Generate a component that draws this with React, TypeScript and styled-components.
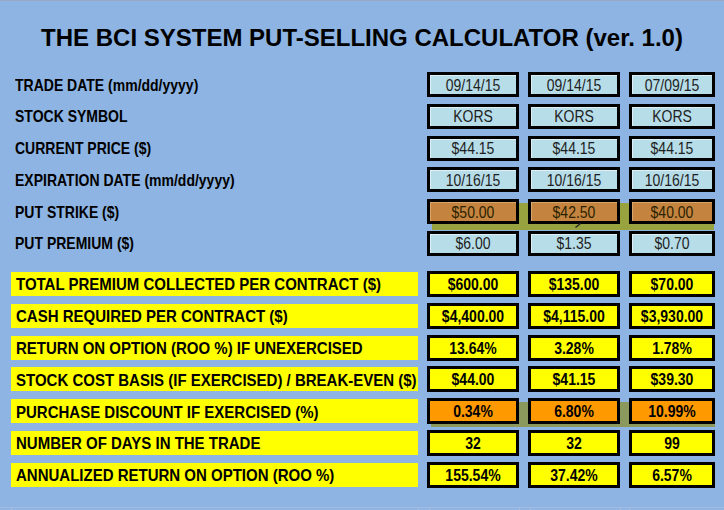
import React from 'react';
import styled, { createGlobalStyle, css } from 'styled-components';

const Global = createGlobalStyle`
  html, body { margin: 0; padding: 0; background: #8db4e2; }
  body { font-family: "Liberation Sans", Arial, sans-serif; }
`;

const Sheet = styled.div`
  width: 724px;
  height: 510px;
  box-sizing: border-box;
  border-top: 1px solid #98a9c2;
  background: #8db4e2;
  display: flex;
  flex-direction: column;
  overflow: hidden;
`;

const Title = styled.h1`
  margin: 0;
  height: 71px;
  box-sizing: border-box;
  padding-top: 2px;
  display: flex;
  align-items: center;
  justify-content: center;
  font-size: 24px;
  font-weight: 700;
  color: #000;
`;

const Section = styled.section<{ $gap: number; $top?: number }>`
  display: flex;
  flex-direction: column;
  align-items: flex-start;
  gap: ${(p) => p.$gap}px;
  margin-top: ${(p) => p.$top ?? 0}px;
  padding-left: 11px;
`;

type Band = { left: number; right: number; top: number; bottom: number; color: string };

const Row = styled.div<{ $h: number; $band?: Band }>`
  position: relative;
  display: grid;
  grid-template-columns: 407px 92px 92px 86px;
  column-gap: 9px;
  width: 704px;
  height: ${(p) => p.$h}px;
  ${(p) =>
    p.$band &&
    css`
      &::before {
        content: '';
        position: absolute;
        left: ${p.$band.left}px;
        right: ${p.$band.right}px;
        top: ${p.$band.top}px;
        bottom: ${p.$band.bottom}px;
        background: ${p.$band.color};
      }
    `}
`;

const Txt = styled.span`
  display: inline-block;
  transform: scaleY(1.15);
`;

const Label = styled.div`
  align-self: center;
  padding-left: 4px;
  font-size: 14px;
  font-weight: 700;
  color: #000;
  white-space: nowrap;
`;

const YellowLabel = styled.div`
  align-self: center;
  height: 24px;
  box-sizing: border-box;
  padding-left: 5px;
  display: flex;
  align-items: center;
  background: #ffff00;
  font-size: 15px;
  font-weight: 700;
  color: #000;
  white-space: nowrap;
`;

const tones = {
  blue: { bg: '#b7dde8', fg: '#1e1e1e', hi: 'rgba(255,255,255,0.55)' },
  brown: { bg: '#c4843f', fg: '#2a2200', hi: 'rgba(255,230,190,0.35)' },
  yellow: { bg: '#ffff00', fg: '#000', hi: 'rgba(255,255,255,0)' },
  orange: { bg: '#ff9900', fg: '#000', hi: 'rgba(255,255,255,0)' },
};
type Tone = keyof typeof tones;

const Cell = styled.div<{ $tone: Tone; $bold?: boolean }>`
  position: relative;
  z-index: 1;
  box-sizing: border-box;
  border: 3px solid #000;
  background: ${(p) => tones[p.$tone].bg};
  box-shadow: inset 1px 1px 0 ${(p) => tones[p.$tone].hi};
  color: ${(p) => tones[p.$tone].fg};
  display: flex;
  align-items: center;
  justify-content: center;
  font-size: 14px;
  font-weight: ${(p) => (p.$bold ? 700 : 400)};
  white-space: nowrap;
`;

const Tick = styled.svg`
  position: absolute;
  left: 44px;
  bottom: -7px;
  width: 6px;
  height: 5px;
`;

const Footer = styled.div`
  margin-top: auto;
  height: 2px;
  border-top: 1px solid #a6bcdc;
  display: grid;
  grid-template-columns: 11px 407px 11px 90px 11px 90px 9px 86px 1fr;
`;

const FooterTick = styled.span`
  border-left: 1px solid #a6bcdc;
`;

type DataRow = { label: string; values: string[]; tone: Tone; band?: Band; tick?: boolean };

const inputs: DataRow[] = [
  { label: 'TRADE DATE (mm/dd/yyyy)', values: ['09/14/15', '09/14/15', '07/09/15'], tone: 'blue' },
  { label: 'STOCK SYMBOL', values: ['KORS', 'KORS', 'KORS'], tone: 'blue' },
  { label: 'CURRENT PRICE ($)', values: ['$44.15', '$44.15', '$44.15'], tone: 'blue' },
  { label: 'EXPIRATION DATE (mm/dd/yyyy)', values: ['10/16/15', '10/16/15', '10/16/15'], tone: 'blue' },
  {
    label: 'PUT STRIKE ($)',
    values: ['$50.00', '$42.50', '$40.00'],
    tone: 'brown',
    band: { left: 421, right: 1, top: 4, bottom: -6, color: '#98a23e' },
    tick: true,
  },
  { label: 'PUT PREMIUM ($)', values: ['$6.00', '$1.35', '$0.70'], tone: 'blue' },
];

const outputs: DataRow[] = [
  { label: 'TOTAL PREMIUM COLLECTED PER CONTRACT ($)', values: ['$600.00', '$135.00', '$70.00'], tone: 'yellow' },
  { label: 'CASH REQUIRED PER CONTRACT ($)', values: ['$4,400.00', '$4,115.00', '$3,930.00'], tone: 'yellow' },
  { label: 'RETURN ON OPTION (ROO %) IF UNEXERCISED', values: ['13.64%', '3.28%', '1.78%'], tone: 'yellow' },
  { label: 'STOCK COST BASIS (IF EXERCISED) / BREAK-EVEN ($)', values: ['$44.00', '$41.15', '$39.30'], tone: 'yellow' },
  {
    label: 'PURCHASE DISCOUNT IF EXERCISED (%)',
    values: ['0.34%', '6.80%', '10.99%'],
    tone: 'orange',
    band: { left: 420, right: 0, top: 4, bottom: -3, color: '#8c995d' },
  },
  { label: 'NUMBER OF DAYS IN THE TRADE', values: ['32', '32', '99'], tone: 'yellow' },
  { label: 'ANNUALIZED RETURN ON OPTION (ROO %)', values: ['155.54%', '37.42%', '6.57%'], tone: 'yellow' },
];

export default function App() {
  return (
    <>
      <Global />
      <Sheet>
        <Title>THE BCI SYSTEM PUT-SELLING CALCULATOR (ver. 1.0)</Title>
        <Section $gap={6.8}>
          {inputs.map((r) => (
            <Row key={r.label} $h={25} $band={r.band}>
              <Label>
                <Txt>{r.label}</Txt>
              </Label>
              {r.values.map((v, i) => (
                <Cell key={i} $tone={r.tone}>
                  <Txt>{v}</Txt>
                  {r.tick && i === 1 && (
                    <Tick viewBox="0 0 6 5">
                      <line x1="0.5" y1="4.5" x2="5.5" y2="0.5" stroke="#222" strokeWidth="1.2" />
                    </Tick>
                  )}
                </Cell>
              ))}
            </Row>
          ))}
        </Section>
        <Section $gap={5.8} $top={15}>
          {outputs.map((r) => (
            <Row key={r.label} $h={26} $band={r.band}>
              <YellowLabel>
                <Txt>{r.label}</Txt>
              </YellowLabel>
              {r.values.map((v, i) => (
                <Cell key={i} $tone={r.tone} $bold>
                  <Txt>{v}</Txt>
                </Cell>
              ))}
            </Row>
          ))}
        </Section>
        <Footer>
          <span />
          <FooterTick />
          <FooterTick />
          <FooterTick />
          <FooterTick />
          <FooterTick />
          <FooterTick />
          <FooterTick />
          <span />
        </Footer>
      </Sheet>
    </>
  );
}
